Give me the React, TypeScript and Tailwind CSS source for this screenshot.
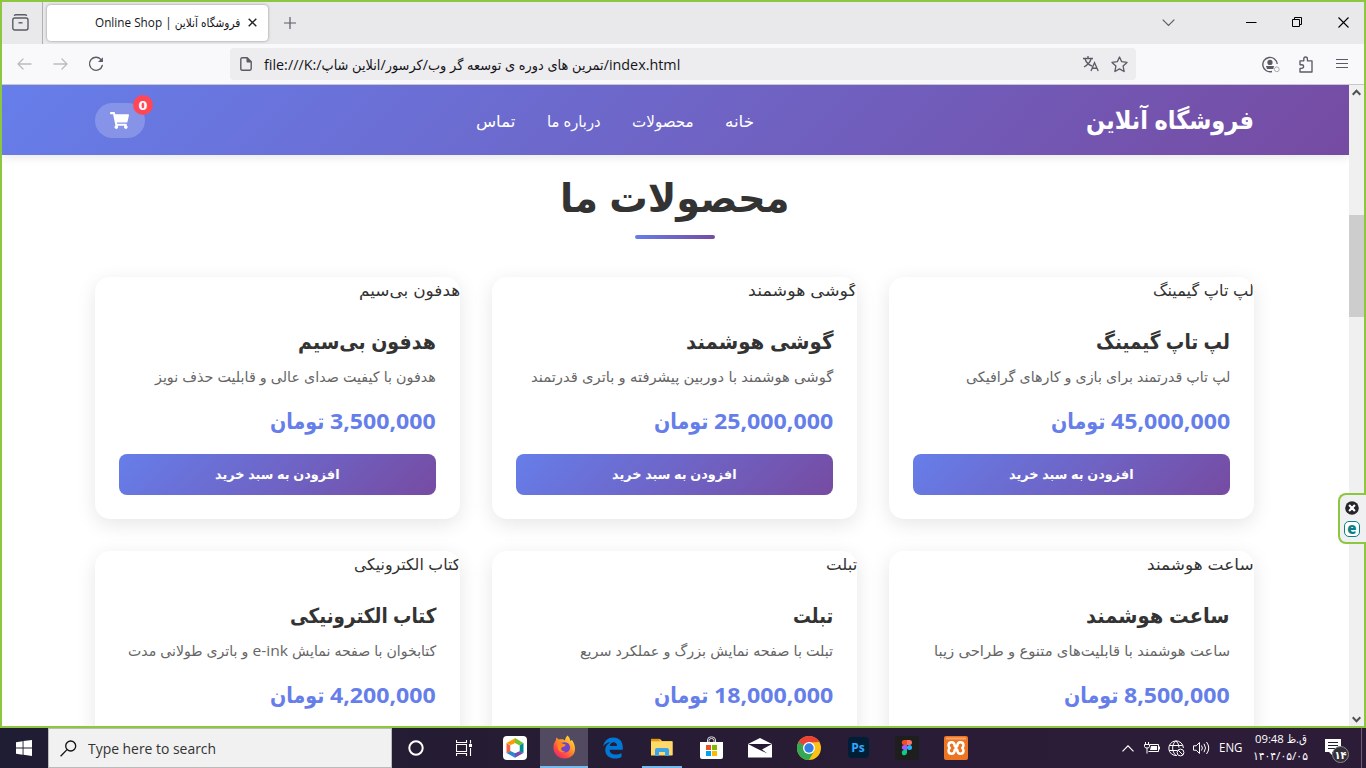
import React, { useLayoutEffect, useRef } from "react";
import { FaShoppingCart } from "react-icons/fa";

/* A single line of text that is condensed or widened to fill its box. */
function Fit({ children, className = "", rtl = false }: { children: React.ReactNode; className?: string; rtl?: boolean }) {
  const box = useRef<HTMLSpanElement>(null);
  const line = useRef<HTMLSpanElement>(null);
  useLayoutEffect(() => {
    const fit = () => {
      const b = box.current;
      const l = line.current;
      if (b && l && l.offsetWidth) l.style.transform = `scaleX(${b.offsetWidth / l.offsetWidth})`;
    };
    fit();
    document.fonts?.ready.then(fit);
  }, []);
  return (
    <span ref={box} dir={rtl ? "rtl" : "ltr"} className={`block shrink-0 whitespace-nowrap text-start ${className}`}>
      <span ref={line} className={`inline-block ${rtl ? "origin-right" : "origin-left"}`}>{children}</span>
    </span>
  );
}

type Product = { name: string; desc: string; price: string; altW: string; nameW: string; descW: string; priceW: string };

const products: Product[] = [
  { name: "لپ تاپ گیمینگ", desc: "لپ تاپ قدرتمند برای بازی و کارهای گرافیکی", price: "45,000,000", altW: "w-[101px]", nameW: "w-[134px]", descW: "w-[264px]", priceW: "w-[119px]" },
  { name: "گوشی هوشمند", desc: "گوشی هوشمند با دوربین پیشرفته و باتری قدرتمند", price: "25,000,000", altW: "w-[109px]", nameW: "w-[147px]", descW: "w-[302px]", priceW: "w-[119px]" },
  { name: "هدفون بی‌سیم", desc: "هدفون با کیفیت صدای عالی و قابلیت حذف نویز", price: "3,500,000", altW: "w-[101px]", nameW: "w-[138px]", descW: "w-[281px]", priceW: "w-[106px]" },
  { name: "ساعت هوشمند", desc: "ساعت هوشمند با قابلیت‌های متنوع و طراحی زیبا", price: "8,500,000", altW: "w-[107px]", nameW: "w-[144px]", descW: "w-[296px]", priceW: "w-[106px]" },
  { name: "تبلت", desc: "تبلت با صفحه نمایش بزرگ و عملکرد سریع", price: "18,000,000", altW: "w-[31px]", nameW: "w-[40px]", descW: "w-[253px]", priceW: "w-[119px]" },
  { name: "کتاب الکترونیکی", desc: "کتابخوان با صفحه نمایش e-ink و باتری طولانی مدت", price: "4,200,000", altW: "w-[106px]", nameW: "w-[146px]", descW: "w-[308px]", priceW: "w-[106px]" },
];

function Card({ p, buyable }: { p: Product; buyable: boolean }) {
  return (
    <article className="h-[242px] overflow-hidden rounded-[15px] bg-white shadow-[0_5px_20px_rgba(0,0,0,0.1)]">
      <Fit rtl className={`h-[26px] text-[16px] leading-[26px] text-[#333] ${p.altW}`}>{p.name}</Fit>
      <div className="px-6 pt-[21px]">
        <Fit rtl className={`h-[34px] text-[20.8px] font-bold leading-[34px] text-[#333] ${p.nameW}`}>{p.name}</Fit>
        <Fit rtl className={`mt-[7px] h-[23px] text-[14.4px] leading-[23px] text-[#666] ${p.descW}`}>{p.desc}</Fit>
        <div className="mt-[14px] flex h-9 gap-[6px] text-[22px] font-bold leading-9 text-[#667eea]">
          <Fit className={p.priceW}>{p.price}</Fit>
          <Fit rtl className="w-[54px]">تومان</Fit>
        </div>
        {buyable && (
          <button className="mt-[16px] flex h-[41px] w-full items-center justify-center rounded-lg bg-[linear-gradient(135deg,#667eea,#764ba2)] text-[13.333px] font-bold text-white">
            <Fit rtl className="w-[125px]">افزودن به سبد خرید</Fit>
          </button>
        )}
      </div>
    </article>
  );
}

function TabBar() {
  return (
    <div className="flex h-[42px] shrink-0 items-center bg-[#e9e9eb] text-[#5b5b66]">
      <div className="flex h-full w-[41px] items-center border-r border-[#b0b0b4] pl-[10px]">
        <svg className="-mt-[2px]" width="17" height="17" viewBox="0 0 17 17" fill="none" stroke="currentColor" strokeWidth="1.4">
          <path d="M2.5 1.3Q3 .8 4 .8h9q1 0 1.5.5" strokeLinecap="round" />
          <rect x=".8" y="4" width="15.2" height="12" rx="2" />
          <path d="M6.5 8.8h4" />
        </svg>
      </div>
      <div className="ml-1 mt-[-1px] flex h-9 w-[221px] items-center rounded bg-white pl-[48px] shadow-[0_0_3px_rgba(0,0,0,0.4)]">
        <Fit rtl className="w-[145px] text-[12px] leading-5 text-[#15141a]">فروشگاه آنلاین | Online Shop</Fit>
        <svg className="ml-[8px]" width="9" height="9" viewBox="0 0 9 9" stroke="#222" strokeWidth="1.4"><path d="M.7.7l7.6 7.6M8.3.7L.7 8.3" /></svg>
      </div>
      <svg className="ml-[16px]" width="12" height="12" viewBox="0 0 12 12" stroke="currentColor" strokeWidth="1.2"><path d="M6 0v12M0 6h12" /></svg>
      <svg className="ml-auto" width="13" height="8" viewBox="0 0 13 8" fill="none" stroke="currentColor" strokeWidth="1.2"><path d="M.7.7l5.8 5.8L12.3.7" /></svg>
      <svg className="ml-[71px] -mt-[2px]" width="11" height="11" viewBox="0 0 11 11"><path d="M0 5h10.5v1H0z" fill="#000" /></svg>
      <svg className="ml-[35px] -mt-[2px]" width="10" height="10" viewBox="0 0 10 10" fill="none" stroke="#000"><path d="M.5 2.5h7v7h-7zM2.5 2.5v-2h7v7h-2" /></svg>
      <svg className="ml-[36px] mr-[15px] -mt-[2px]" width="11" height="11" viewBox="0 0 11 11" stroke="#000" strokeWidth="1.1"><path d="M.5.5l10 10M10.5.5l-10 10" /></svg>
    </div>
  );
}

function Toolbar() {
  return (
    <div className="flex h-[41px] shrink-0 items-center border-b border-[#c8c8cc] bg-[#f9f9fb] text-[#5b5b66]">
      <svg className="ml-[15px]" width="15" height="12" viewBox="0 0 15 12" fill="none" stroke="#bcbcc0" strokeWidth="1.3"><path d="M14 6H1M6 1L1 6l5 5" strokeLinecap="round" strokeLinejoin="round" /></svg>
      <svg className="ml-[21px]" width="15" height="12" viewBox="0 0 15 12" fill="none" stroke="#bcbcc0" strokeWidth="1.3"><path d="M1 6h13M9 1l5 5-5 5" strokeLinecap="round" strokeLinejoin="round" /></svg>
      <svg className="ml-[20px]" width="17" height="16" viewBox="0 0 17 16" fill="none" stroke="currentColor" strokeWidth="1.4" strokeLinecap="round"><path d="M14.3 9.5A6.5 6.5 0 1 1 12.8 3.4L14.3 5" /><path d="M10 6.1h4.9V1.2z" fill="currentColor" stroke="none" /></svg>
      <div className="ml-[125px] flex h-8 w-[906px] items-center rounded bg-[#ededef]">
        <svg className="ml-[10px]" width="12" height="14" viewBox="0 0 12 14" fill="none" stroke="currentColor" strokeWidth="1.4" strokeLinejoin="round"><path d="M2.2.8h5l4 4v7q0 1.4-1.4 1.4H2.2Q.8 13.2.8 11.8V2.2Q.8.8 2.2.8z" /><path d="M7.2.8v4h4" fill="currentColor" /></svg>
        <Fit className="ml-[12px] mt-[1px] w-[416px] text-[14px] leading-6 text-[#15141a]">file:///K:/تمرین های دوره ی توسعه گر وب/کرسور/انلاین شاپ/index.html</Fit>
        <svg className="ml-auto" width="16" height="16" viewBox="0 0 16 16" fill="none" stroke="currentColor" strokeWidth="1.35"><path d="M0 2.5h10M5 0v2.5M2 2.8Q3.5 8 9 10M8.2 2.8Q6.5 8 1 11M8 15l3.5-8.4L15.2 15M9.1 12.2h5" /></svg>
        <svg className="ml-[12px] mr-[8px]" width="17" height="17" viewBox="0 0 17 17" fill="none" stroke="currentColor" strokeWidth="1.35" strokeLinejoin="round"><path d="M8.5 1l2.2 4.7 5.3.7-3.9 3.6 1 5.5-4.6-2.6-4.6 2.6 1-5.5L1 6.4l5.3-.7z" /></svg>
      </div>
      <svg className="ml-[126px]" width="18" height="17" viewBox="0 0 18 17" fill="none" stroke="currentColor" strokeWidth="1.4"><path d="M10 15.5A7.2 7.2 0 1 1 15.2 8" /><circle cx="8" cy="6.4" r="2.6" fill="currentColor" stroke="none" /><path d="M4 10h8l-.7 3H5z" fill="currentColor" stroke="none" /><circle cx="14.8" cy="13.3" r="2.4" stroke="#aaaab0" strokeWidth="1" /></svg>
      <svg className="ml-[19px]" width="14" height="17" viewBox="0 0 14 17" fill="none" stroke="currentColor" strokeWidth="1.35" strokeLinejoin="round"><path d="M1 4.8h3.8V3q0-2 1.8-2t1.8 2v1.8H13V16H1v-3.7h1.6q2 0 2-1.8t-2-1.8H1z" /></svg>
      <svg className="ml-[23px] mr-auto -mt-[1px]" width="12" height="11" viewBox="0 0 12 11" stroke="currentColor" strokeWidth="1.2"><path d="M0 1.500h12M0 5.500h12M0 9.500h12" /></svg>
    </div>
  );
}

function ShopPage() {
  return (
    <main className="flex h-full w-[1347px] flex-col overflow-hidden bg-white">
      <header className="z-10 flex h-[70px] shrink-0 items-center bg-[linear-gradient(135deg,#667eea,#764ba2)] pl-[93px] text-white shadow-[0_2px_10px_rgba(0,0,0,0.1)]">
        <div className="relative mt-[1px] flex h-[35px] w-[50px] items-center justify-center rounded-full bg-white/20">
          <FaShoppingCart className="mr-[2px] h-[17px] w-[19px]" />
          <span className="absolute -top-2 -right-2 flex size-5 items-center justify-center rounded-full bg-[#ff4757] pt-[1px] font-['DejaVu_Sans',sans-serif] text-[12.8px] font-bold leading-5">0</span>
        </div>
        <nav className="ml-[331px] flex pt-[1px] text-[16px]">
          <Fit rtl className="w-[39px]">تماس</Fit>
          <Fit rtl className="ml-[31px] w-[54px]">درباره ما</Fit>
          <Fit rtl className="ml-[32px] w-[62px]">محصولات</Fit>
          <Fit rtl className="ml-[31px] w-[29px]">خانه</Fit>
        </nav>
        <Fit rtl className="ml-[332px] w-[168px] text-[25.6px] font-bold">فروشگاه آنلاین</Fit>
      </header>
      <section className="ml-[93px] flex w-[1159px] flex-col">
        <div className="flex h-[122px] flex-col items-center pt-[10px]">
          <h1 className="text-[40px] font-bold leading-[64px] text-[#333]"><Fit rtl className="w-[229px]">محصولات ما</Fit></h1>
          <div className="mt-[6px] h-1 w-20 rounded-[2px] bg-[linear-gradient(135deg,#667eea,#764ba2)]" />
        </div>
        <div dir="rtl" className="grid grid-cols-3 gap-8">
          {products.map((p, i) => <Card key={p.name} p={p} buyable={i < 3} />)}
        </div>
      </section>
    </main>
  );
}

function Scrollbar() {
  return (
    <div className="flex h-full w-[15px] flex-col items-center justify-between bg-[#f0f0f0]">
      <svg className="mt-[4px]" width="9" height="7" viewBox="0 0 9 7" fill="none" stroke="#505050" strokeWidth="2"><path d="M.7 5.7l3.8-4 3.8 4" /></svg>
      <div className="-mt-[5px] mb-auto w-full pt-[124px]"><div className="h-[102px] bg-[#cdcdcd]" /></div>
      <svg className="mb-[3px]" width="9" height="7" viewBox="0 0 9 7" fill="none" stroke="#505050" strokeWidth="2"><path d="M.7 1.3l3.8 4 3.8-4" /></svg>
    </div>
  );
}

function AppSlot({ children, active = "" }: { children: React.ReactNode; active?: string }) {
  return <div className={`mr-px flex h-10 w-[48px] shrink-0 items-center justify-center ${active}`}>{children}</div>;
}

function Taskbar() {
  return (
    <footer className="flex h-10 items-center bg-[linear-gradient(90deg,#1f1d33,#261c34_40%,#2d1c38)] text-white">
      <div className="flex h-full w-12 items-center justify-center">
        <svg width="16" height="16" viewBox="0 0 16 16" fill="#fff"><path d="M0 2.2L6.6 1.2v6.3H0zM7.5 1.1L16 0v7.5H7.5zM0 8.4h6.6v6.3L0 13.8zM7.5 8.4H16V16l-8.5-1.2z" /></svg>
      </div>
      <div className="flex h-full w-[344px] items-center border border-[#bbb] bg-[#f1f1f1]">
        <svg className="ml-[11px]" width="17" height="17" viewBox="0 0 17 17" fill="none" stroke="#111" strokeWidth="1.3"><circle cx="10.7" cy="6" r="5" /><path d="M7 9.6L.6 16.2" /></svg>
        <Fit className="ml-[11px] w-[128px] text-[15px] leading-6 text-[#333]">Type here to search</Fit>
      </div>
      <AppSlot><svg width="16" height="16" viewBox="0 0 16 16"><circle cx="8" cy="8" r="6.7" fill="none" stroke="#fff" strokeWidth="2" /></svg></AppSlot>
      <AppSlot>
        <svg className="-ml-[2px]" width="16" height="16" viewBox="0 0 16 16" fill="none" stroke="#fff" strokeWidth="1.1"><path d="M.5 0v2.500h10V0M.5 16v-2.500h10V16M.5 4.500h10v7H.5zM14.500 0v3.500M14.500 8v8" /><path d="M13 4h3v3h-3z" fill="#fff" stroke="none" /></svg>
      </AppSlot>
      <AppSlot>
        <svg className="ml-[2px]" width="24" height="24" viewBox="0 0 24 24"><rect width="24" height="24" rx="4" fill="#fff" /><path d="M12 2.200l4.500 2.500L12 8 7.500 9 3.500 7z" fill="#ff9d00" /><path d="M12 2.200L20.500 7l-4 2.500L12 7.500z" fill="#72c52b" /><path d="M20.500 7v10l-4-1.500v-6z" fill="#008c94" /><path d="M20.500 17L12 21.800l-.3-4.500 4.800-2z" fill="#7c4bb0" /><path d="M12 21.800L3.500 17l4-2 4.500 2z" fill="#268bd2" /><path d="M3.500 17V7l4 2.500v6z" fill="#f06543" /><path d="M12 7l4.500 2.500v5L12 17l-4.500-2.500v-5z" fill="#fff" /></svg>
      </AppSlot>
      <div className="w-px" />
      <AppSlot active="border-b-2 border-[#76b9ed] bg-[#514a60]">
        <svg width="23" height="24" viewBox="0 0 23 24"><defs><linearGradient id="fire" x1="1" y1="0" x2=".2" y2="1"><stop stopColor="#fff44f" /><stop offset=".4" stopColor="#ffa325" /><stop offset=".75" stopColor="#ff4b45" /><stop offset="1" stopColor="#e92375" /></linearGradient></defs><path d="M14.600.5C17 3 17.200 5 17.200 6L19 5c6 8.500 3 18.500-7.500 18.500C5.500 23.500.4 19 .4 12.500c0-3 1-5.300 2.400-7 .1-1.200.1-2 .8-3.100l2 2.200C8.200 4 10.600 4.300 12 5.600c.2-2.500 1.200-4 2.600-5.100z" fill="url(#fire)" /><path d="M8 8c5.500-2.500 9.700 1 9 5.500-.7 4-5.500 5.200-8.200 2.600-2-1.900-1.500-4.200.4-4.200 2.500 0 3.300-1.500 3.300-2z" fill="#7244c9" /><path d="M6 5l.5 3 6 1.400c0 2-3.200 1.600-4.200 3.600-.6 2 1.200 3.600 3.800 3-2.500 2.400-6.800.9-7.300-2.700C4.200 9.600 4 7 6 5z" fill="#ff8b1c" /></svg>
      </AppSlot>
      <AppSlot>
        <svg width="20" height="22" viewBox="0 0 20 22"><path d="M.2 9.500C1 3.800 4.800.4 10.300.4c6.200 0 9.500 4.400 9.500 9.800v2.500H6.600c.2 5.300 7.400 6.100 11.900 3.200v4C11.900 23.500 2.300 21 2.300 13.200c0-4 2.300-6.600 5.400-8C4.400 5.200 1.700 7 .2 9.500zM6.800 9H14c-.1-5-6.400-5-7.200 0z" fill="#0078d7" /></svg>
      </AppSlot>
      <AppSlot>
        <div className="flex h-10 w-10 items-center justify-center border-b-2 border-[#76b9ed]">
          <svg width="22" height="19" viewBox="0 0 22 19"><path d="M0 1h9l2 2h10.500v14H0z" fill="#f7c64c" /><path d="M0 4h21.500v13.500H0z" fill="#ffd969" /><path d="M0 .8h8.500V3H0z" fill="#e59a08" /><path d="M4 18v-6q0-2 2-2h10q2 0 2 2v6h-4v-4H8v4z" fill="#3da4e8" /></svg>
        </div>
      </AppSlot>
      <AppSlot>
        <svg width="23" height="24" viewBox="0 0 23 24"><path d="M7.500 7V4q0-3.200 4-3.200t4 3.200v3M9 7V4.500q0-2 2.500-2T14 4.500V7" fill="none" stroke="#ddd" /><path d="M0 6h23v15q0 2-2 2H2q-2 0-2-2z" fill="#fff" /><path d="M6 9h5v5H6z" fill="#f25022" /><path d="M12 9h5v5h-5z" fill="#7fba00" /><path d="M6 15h5v5H6z" fill="#00a4ef" /><path d="M12 15h5v5h-5z" fill="#ffb900" /></svg>
      </AppSlot>
      <AppSlot>
        <svg width="24" height="20" viewBox="0 0 24 20"><path d="M0 6l12-6 12 6v13.500H0z" fill="#fff" /><path d="M0 6h24l-10 5.600 5.400 4L7.700 10z" fill="#251b33" /></svg>
      </AppSlot>
      <AppSlot>
        <svg width="24" height="24" viewBox="0 0 24 24"><circle cx="12" cy="12" r="12" fill="#fbc116" /><path d="M1.600 6A12 12 0 0 0 12 24l5.200-9H12z" fill="#34a853" /><path d="M1.600 6A12 12 0 0 1 22.400 6L12 6.500 12 12l-5.200 3z" fill="#ea4335" /><path d="M1.600 6l5.200 9L12 12z" fill="#34a853" /><circle cx="12" cy="12" r="6" fill="#fff" /><circle cx="12" cy="12" r="4.700" fill="#347ee8" /></svg>
      </AppSlot>
      <AppSlot><div className="-mt-px flex h-[21px] w-[21px] items-center justify-center rounded-[4px] bg-[#001e36] text-[12px] font-bold text-[#31a8ff]">Ps</div></AppSlot>
      <AppSlot>
        <svg width="24" height="24" viewBox="0 0 24 24"><rect width="24" height="24" fill="#1e1e1e" /><path d="M12 4v5H9.300a2.500 2.500 0 0 1 0-5z" fill="#f24e1e" /><path d="M12 4h2.500a2.500 2.500 0 0 1 0 5H12z" fill="#ff7262" /><path d="M12 9v5H9.300a2.500 2.500 0 0 1 0-5z" fill="#a259ff" /><circle cx="14.500" cy="11.500" r="2.500" fill="#1abcfe" /><path d="M12 14v2.700A2.600 2.600 0 1 1 9.300 14z" fill="#0acf83" /></svg>
      </AppSlot>
      <AppSlot>
        <svg width="24" height="24" viewBox="0 0 24 24"><rect width="24" height="24" rx="2" fill="#ed7422" /><path d="M2 1.500h20v2H2z" fill="#f6a66b" /><path d="M7.700 6.200q2.800 0 3 3.800h2.600q.2-3.800 3-3.800q3.200 0 3.200 3q0 1.800-1.300 2.800q1.300 1 1.300 2.800q0 3-3.200 3q-2.800 0-3-3.800h-2.600q-.2 3.800-3 3.800q-3.200 0-3.200-3q0-1.800 1.300-2.800q-1.300-1-1.300-2.800q0-3 3.200-3z" fill="none" stroke="#fff" strokeWidth="2.500" strokeLinejoin="round" /><path d="M10.500 10.500h3v3h-3z" fill="#fff" /></svg>
      </AppSlot>
      <div className="ml-auto flex h-full items-center">
        <svg width="12" height="7" viewBox="0 0 12 7" fill="none" stroke="#fff" strokeWidth="1.2"><path d="M.5 6.300L6 .8l5.500 5.500" /></svg>
        <svg className="ml-[10px]" width="16" height="12" viewBox="0 0 16 12" fill="none" stroke="#fff"><path d="M6 2.500h8.500v7H4.500M1.500 0v2M4.500 0v2M.5 2.500h5v2q0 1.500-2.500 1.500T.5 4.500zM3 6v5.500M15.500 4.500v3" /><path d="M7 4h6v4H6z" fill="#fff" stroke="none" /></svg>
        <svg className="ml-[8px]" width="17" height="17" viewBox="0 0 17 17" fill="none" stroke="#fff"><path d="M9 15.500A7.300 7.300 0 1 1 15.400 8M1 5.500h13.500M1 10.500h8M8 .7C3.500 4.500 3.500 11.500 8 15.500M8 .7q3 3 3 7" /><circle cx="12.500" cy="12.500" r="3.400" /><path d="M10.200 10.200l4.600 4.600" /></svg>
        <svg className="ml-[8px]" width="17" height="14" viewBox="0 0 17 14" fill="none" stroke="#fff"><path d="M.5 4.800h2.700L6.500 1.500v11L3.200 9.200H.5zM8.500 4.500q1.800 2.500 0 5M11 2.800q3 4.200 0 8.400M13.500 1q4.500 6 0 12" /></svg>
        <Fit className="ml-[9px] w-[23px] text-[12px] leading-5">ENG</Fit>
        <div className="ml-[11px] flex w-[55px] flex-col items-center text-[11.500px] leading-[17px]">
          <Fit rtl className="-mt-[2px] w-[52px]">ق.ظ 09:48</Fit>
          <Fit className="w-[55px]">۱۴۰۴/۰۵/۰۵</Fit>
        </div>
        <div className="relative ml-[17px] mt-[5px] h-6 w-[25px]">
          <svg width="17" height="18" viewBox="0 0 17 18"><path d="M0 0h16v13H7v3l-3-3H0z" fill="#fff" /><path d="M3 3.500h10M3 6.500h10M3 9.500h7" stroke="#2b1c36" /></svg>
          <span className="absolute left-[7px] top-[7px] flex size-[17px] items-center justify-center rounded-full border border-[#888] bg-[#333039] text-[11px] font-bold leading-none">۱۴</span>
        </div>
        <div className="ml-[11px] mr-1 h-full w-px bg-[#6c6074]" />
      </div>
    </footer>
  );
}

function SideWidget() {
  return (
    <aside className="absolute right-0 top-[493px] flex h-[51px] w-[28px] flex-col items-center gap-[6px] rounded-l-[8px] border-2 border-r-0 border-[#8dc63f] bg-[#f0f0f2] pr-[2px] pt-[6px]">
      <svg className="shrink-0" width="14" height="14" viewBox="0 0 13 13"><circle cx="6.500" cy="6.500" r="6.300" fill="#25252b" /><path d="M3.800 3.800l5.400 5.400M9.200 3.800L3.800 9.200" stroke="#fff" strokeWidth="2" /></svg>
      <span className="flex h-4 w-4 shrink-0 items-center justify-center rounded-[5px] border border-[#078087] bg-white pb-[2px] text-[15px] font-extrabold leading-none text-[#078087]">e</span>
    </aside>
  );
}

export default function App() {
  return (
    <div className="relative flex h-[768px] w-[1366px] flex-col overflow-hidden bg-white font-['Open_Sans','DejaVu_Sans_Condensed','DejaVu_Sans',sans-serif]">
      <div className="flex h-[728px] shrink-0 flex-col overflow-hidden border-2 border-[#8dc63f]">
        <TabBar />
        <Toolbar />
        <div className="flex min-h-0 flex-1"><ShopPage /><Scrollbar /></div>
      </div>
      <Taskbar />
      <SideWidget />
    </div>
  );
}
